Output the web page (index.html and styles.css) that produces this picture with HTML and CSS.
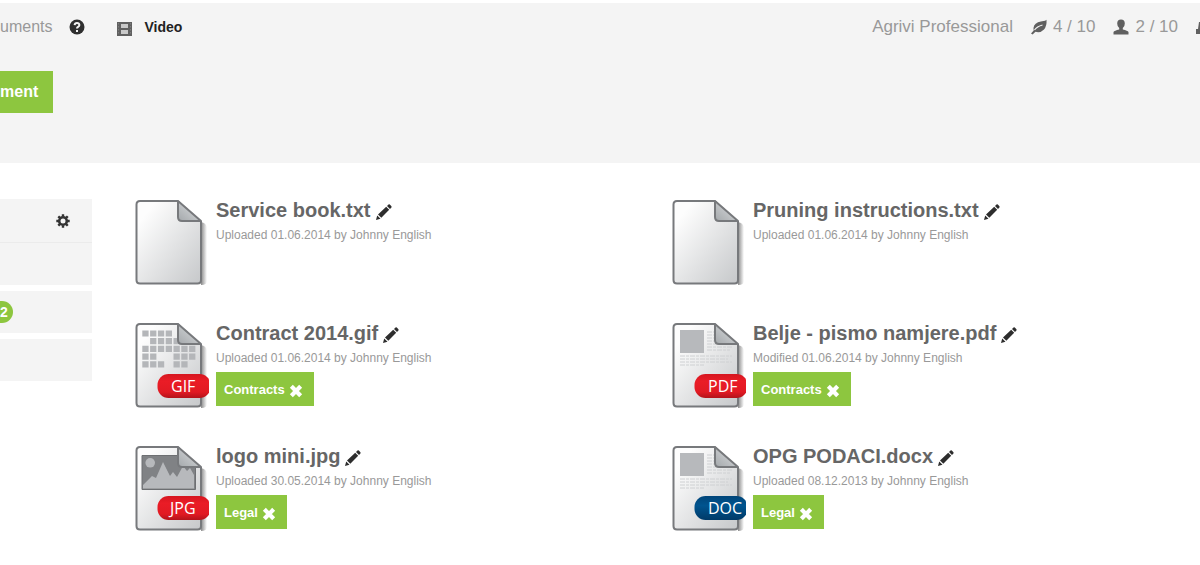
FILE: index.html
```html
<!DOCTYPE html>
<html lang="en">
<head>
<meta charset="utf-8">
<title>Documents</title>
<link rel="stylesheet" href="styles.css">
</head>
<body>
<svg class="defs" aria-hidden="true">
  <defs>
    <linearGradient id="paper" x1="0" y1="0" x2="1" y2="1">
      <stop offset="0.15" stop-color="#fdfdfd"/><stop offset="1" stop-color="#c6c8ca"/>
    </linearGradient>
    <linearGradient id="fold" x1="0" y1="1" x2="1" y2="0">
      <stop offset="0" stop-color="#a4a8ab"/><stop offset="1" stop-color="#dfe1e3"/>
    </linearGradient>
    <linearGradient id="shade" x1="0" y1="0" x2="1" y2="0">
      <stop offset="0" stop-color="#888"/><stop offset="1" stop-color="#888" stop-opacity="0"/>
    </linearGradient>
    <linearGradient id="red" x1="0" y1="0" x2="0" y2="1">
      <stop offset="0" stop-color="#d5161f"/><stop offset="0.3" stop-color="#ea1c26"/><stop offset="0.75" stop-color="#e11a23"/><stop offset="1" stop-color="#b3131a"/>
    </linearGradient>
    <linearGradient id="blue" x1="0" y1="0" x2="0" y2="1">
      <stop offset="0" stop-color="#004579"/><stop offset="0.4" stop-color="#00548f"/><stop offset="1" stop-color="#003a68"/>
    </linearGradient>
    <symbol id="sheet" viewBox="0 0 74 86">
      <path d="M66 23q5 1 6 5v54q0 4-6 4z" fill="url(#shade)"/>
      <path d="M5 2H43L66 22V81q0 3.500-3.500 3.500H5Q1.500 84.500 1.500 81V5.500Q1.500 2 5 2z" fill="url(#paper)" stroke="#77797c" stroke-width="2"/>
    </symbol>
    <symbol id="corner" viewBox="0 0 74 86">
      <path d="M43 1L68 1V22H66z" fill="#fff"/>
      <path d="M43 2L66 22H47q-4 0-4-4z" fill="url(#fold)" stroke="#77797c" stroke-width="2" stroke-linejoin="round"/>
    </symbol>
    <symbol id="article" viewBox="0 0 74 86">
      <path d="M8 8h24v23H8z" fill="#b7b9bc"/>
      <path d="M35 10h7M35 13h7M35 16h7M35 19h8M35 22h10M35 25h25M35 28h23M8 34h52M8 37h48M8 40h52M8 43h24" stroke="#ced0d2" stroke-width="1" stroke-dasharray="5 1 3 1"/>
    </symbol>
    <symbol id="pencil" viewBox="0 0 16 16">
      <path d="M0 16l1.200-4.500 3.300 3.300zM2 10.500L10.200 2.800l3 3L5.300 13.800zM11 2L12.500.6q.7-.6 1.300 0l1.600 1.600q.6.700 0 1.300L14 5z" fill="#2d2d2d"/>
    </symbol>
    <symbol id="cross" viewBox="0 0 12 12">
      <path d="M2 2l8 8M10 2l-8 8" stroke="#fff" stroke-width="3.600"/>
    </symbol>
  </defs>
</svg>

<header class="header">
  <div class="bar">
    <nav class="nav">
      <a class="crumb" href="#">uments</a>
      <button class="icon-btn help" type="button" aria-label="Help">
        <svg width="16" height="16" viewBox="0 0 16 16"><circle cx="8" cy="8" r="7.500" fill="#2f2f2f"/><path d="M5.600 6.200Q5.800 4 8 4t2.400 2Q10.400 7.200 9 8 8 8.500 8 9.500M8 11v2" fill="none" stroke="#f4f4f4" stroke-width="2"/></svg>
      </button>
      <a class="video" href="#">
        <svg width="16" height="16" viewBox="0 0 16 16"><path d="M1 1h15v14H1z" fill="#606060"/><path d="M5 3h7v4H5zM5 9h7v4H5z" fill="#c8c8c8"/><path d="M2.500 2v12M14.500 2v12" stroke="#7c7c7c" stroke-width="1" stroke-dasharray="1.500 1.500"/></svg>
        Video
      </a>
    </nav>
    <div class="plan">
      <span>Agrivi Professional</span>
      <span class="quota">
        <svg width="16" height="16" viewBox="0 0 16 16"><path d="M15.500.8Q16 7 13 10.500 9.500 14.200 4.500 12.800L1.600 15.500 0 14.500l2.700-3Q1.500 5.500 7 3.200 10 2.300 12.500 2.100 14.200 2 15.500.8z" fill="#606060"/><path d="M3.500 11Q6 7.500 11.500 6" fill="none" stroke="#f4f4f4" stroke-width="1.200"/></svg>
        4 / 10
      </span>
      <span class="quota">
        <svg width="16" height="16" viewBox="0 0 16 16"><path d="M8 .5q3.800 0 3.800 4 0 3.200-2 4.500v1.600q4.800 1.100 5.700 2.400V15.500H.5V13q.9-1.300 5.700-2.400V9q-2-1.300-2-4.500 0-4 3.800-4z" fill="#606060"/></svg>
        2 / 10
      </span>
      <svg width="16" height="16" viewBox="0 0 16 16"><path d="M3 3h10v5l3 3v4H0v-5h2z" fill="#606060"/></svg>
    </div>
  </div>
  <button class="add" type="button">ment</button>
</header>

<main class="main">
  <aside class="side">
    <div class="panel">
      <div class="cell head">
        <button class="icon-btn" type="button" aria-label="Settings">
          <svg width="14" height="14" viewBox="0 0 14 14"><circle cx="7" cy="7" r="3.800" fill="none" stroke="#333" stroke-width="2.600"/><path d="M7 .3v2.200M7 11.500v2.200M.3 7h2.200M11.500 7h2.200M2.300 2.300l1.600 1.600M10.150 10.150l1.600 1.600M2.300 11.700l1.600-1.600M10.150 3.850l1.600-1.600" stroke="#333" stroke-width="2.400"/></svg>
        </button>
      </div>
      <div class="cell"></div>
    </div>
    <div class="panel"><div class="cell"><span class="badge">2</span></div></div>
    <div class="panel"><div class="cell"></div></div>
  </aside>

  <section class="files">
    <article class="file">
      <svg class="thumb" viewBox="0 0 74 86"><use href="#sheet"/><use href="#corner"/></svg>
      <div class="info">
        <h2 class="name">Service book.txt <button class="icon-btn" type="button" aria-label="Rename"><svg width="16" height="16"><use href="#pencil"/></svg></button></h2>
        <p class="meta">Uploaded 01.06.2014 by Johnny English</p>
      </div>
    </article>

    <article class="file">
      <svg class="thumb" viewBox="0 0 74 86"><use href="#sheet"/><use href="#corner"/></svg>
      <div class="info">
        <h2 class="name">Pruning instructions.txt <button class="icon-btn" type="button" aria-label="Rename"><svg width="16" height="16"><use href="#pencil"/></svg></button></h2>
        <p class="meta">Uploaded 01.06.2014 by Johnny English</p>
      </div>
    </article>

    <article class="file">
      <svg class="thumb" viewBox="0 0 74 86"><use href="#sheet"/>
        <g stroke="#b4b6b9" stroke-width="6.200" fill="none">
          <path d="M7.300 11.500h31" stroke-dasharray="6.300 1.500"/>
          <path d="M15.100 19.200h30" stroke-dasharray="6.300 1.500"/>
          <path d="M7.300 26.900h53.400" stroke-dasharray="6.300 1.500"/>
          <path d="M7.300 34.600h14.100M38.500 34.600h22" stroke-dasharray="6.300 1.500"/>
          <path d="M7.300 42.300h22M38.500 42.300h14.100" stroke-dasharray="6.300 1.500"/>
        </g>
        <use href="#corner"/>
        <rect x="22.500" y="52" width="53" height="24" rx="11" fill="url(#red)"/><text class="ext" x="36" y="70">GIF</text>
      </svg>
      <div class="info">
        <h2 class="name">Contract 2014.gif <button class="icon-btn" type="button" aria-label="Rename"><svg width="16" height="16"><use href="#pencil"/></svg></button></h2>
        <p class="meta">Uploaded 01.06.2014 by Johnny English</p>
        <span class="tag">Contracts <button class="icon-btn" type="button" aria-label="Remove tag"><svg width="14" height="14"><use href="#cross"/></svg></button></span>
      </div>
    </article>

    <article class="file">
      <svg class="thumb" viewBox="0 0 74 86"><use href="#sheet"/><use href="#article"/><use href="#corner"/>
        <rect x="22.500" y="52" width="53" height="24" rx="11" fill="url(#red)"/><text class="ext" x="36" y="70">PDF</text>
      </svg>
      <div class="info">
        <h2 class="name">Belje - pismo namjere.pdf <button class="icon-btn" type="button" aria-label="Rename"><svg width="16" height="16"><use href="#pencil"/></svg></button></h2>
        <p class="meta">Modified 01.06.2014 by Johnny English</p>
        <span class="tag">Contracts <button class="icon-btn" type="button" aria-label="Remove tag"><svg width="14" height="14"><use href="#cross"/></svg></button></span>
      </div>
    </article>

    <article class="file">
      <svg class="thumb" viewBox="0 0 74 86"><use href="#sheet"/>
        <path d="M7 10.500h53.500v34H7z" fill="#808285" stroke="#6d6f72"/>
        <circle cx="15.200" cy="17.800" r="4.800" fill="#b7b9bc"/>
        <path d="M8 43.500V40l9-9 4 2 7-16 7 14 3-4 4 5 6-11 4 5 3-3 4 7v13.500z" fill="#b7b9bc"/>
        <use href="#corner"/>
        <rect x="22.500" y="51" width="53" height="24" rx="11" fill="url(#red)"/><text class="ext" x="35" y="69">JPG</text>
      </svg>
      <div class="info">
        <h2 class="name">logo mini.jpg <button class="icon-btn" type="button" aria-label="Rename"><svg width="16" height="16"><use href="#pencil"/></svg></button></h2>
        <p class="meta">Uploaded 30.05.2014 by Johnny English</p>
        <span class="tag">Legal <button class="icon-btn" type="button" aria-label="Remove tag"><svg width="14" height="14"><use href="#cross"/></svg></button></span>
      </div>
    </article>

    <article class="file">
      <svg class="thumb" viewBox="0 0 74 86"><use href="#sheet"/><use href="#article"/><use href="#corner"/>
        <rect x="22.500" y="51" width="53" height="24" rx="11" fill="url(#blue)"/><text class="ext" x="36" y="69">DOC</text>
      </svg>
      <div class="info">
        <h2 class="name">OPG PODACI.docx <button class="icon-btn" type="button" aria-label="Rename"><svg width="16" height="16"><use href="#pencil"/></svg></button></h2>
        <p class="meta">Uploaded 08.12.2013 by Johnny English</p>
        <span class="tag">Legal <button class="icon-btn" type="button" aria-label="Remove tag"><svg width="14" height="14"><use href="#cross"/></svg></button></span>
      </div>
    </article>
  </section>
</main>
</body>
</html>
```
FILE: styles.css
```css
* { box-sizing: border-box; }
body {
  margin: 0;
  padding-top: 3px;
  background: #fff;
  color: #666;
  font-family: "Liberation Sans", Arial, sans-serif;
  overflow-x: hidden;
}
svg { display: block; flex: none; }
.defs { position: absolute; width: 0; height: 0; }
a { color: inherit; text-decoration: none; }
button { font: inherit; cursor: pointer; }
.icon-btn { flex: none; padding: 0; border: 0; background: none; }

.header { padding-bottom: 50px; background: #f4f4f4; overflow: hidden; }
.bar { display: flex; justify-content: space-between; align-items: center; height: 47px; margin-bottom: 21px; }
.nav { display: flex; align-items: center; }
.crumb { color: #999; font-size: 16px; }
.help { margin: 0 31px 0 17px; }
.video { display: flex; align-items: center; gap: 12px; color: #222; font-size: 14px; font-weight: bold; }
.video svg { margin-top: 4px; }
.plan { display: flex; align-items: center; gap: 18px; margin-right: -12px; color: #999; font-size: 17px; white-space: nowrap; }
.quota { display: flex; align-items: center; gap: 6px; }
.add {
  display: block;
  height: 42px;
  padding: 0 15px 0 0;
  border: 0;
  background: #8dc63f;
  color: #fff;
  font-size: 16px;
  font-weight: bold;
}

.main { display: flex; gap: 43px; padding-top: 36px; }
.side { display: flex; flex-direction: column; flex: none; gap: 6px; width: 92px; }
.panel { background: #f4f4f4; }
.cell { display: flex; align-items: center; height: 42px; }
.head { justify-content: flex-end; height: 44px; padding-right: 22px; border-bottom: 1px solid #ebebeb; }
.badge {
  padding-right: 5px;
  border-radius: 0 11px 11px 0;
  background: #8dc63f;
  color: #fff;
  font-size: 14px;
  font-weight: bold;
  line-height: 22px;
}

.files { display: grid; grid-template-columns: 1fr 1fr; gap: 37px 9px; flex: 1; }
.file { display: flex; gap: 7px; height: 86px; }
.thumb { width: 74px; height: 86px; }
.ext { fill: #fff; font: 16px "Open Sans", "Noto Sans", sans-serif; }
.name { display: flex; align-items: center; gap: 5px; margin: 0 0 4px; font-size: 20px; line-height: 22px; white-space: nowrap; }
.name .icon-btn { padding-top: 4px; }
.meta { margin: 0 0 4px; color: #999; font-size: 12px; line-height: 20px; }
.tag {
  display: inline-flex;
  align-items: center;
  gap: 4px;
  height: 34px;
  padding: 0 11px 0 8px;
  background: #8dc63f;
  color: #fff;
  font-size: 13px;
  font-weight: bold;
}
.tag .icon-btn { padding-top: 3px; }
```
